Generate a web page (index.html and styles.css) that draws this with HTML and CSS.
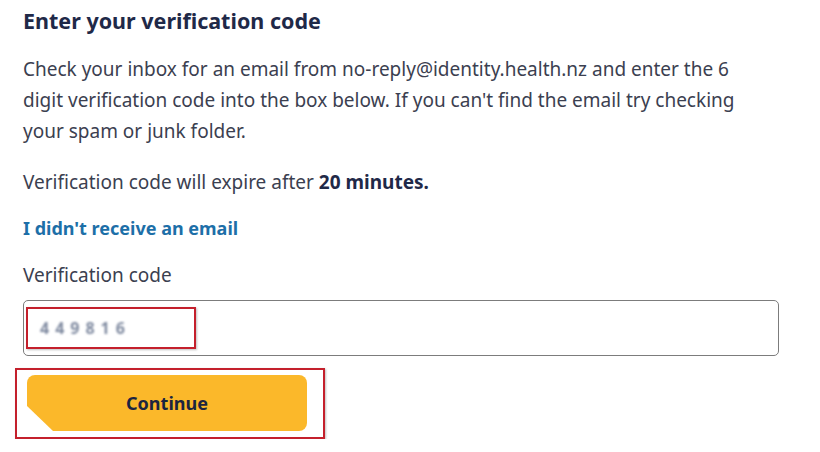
FILE: index.html
```html
<!DOCTYPE html>
<html lang="en">
<head>
<meta charset="utf-8">
<title>Enter your verification code</title>
<link rel="stylesheet" href="styles.css">
</head>
<body>
<main class="page">
  <h1 class="title">Enter your verification code</h1>
  <p class="intro">Check your inbox for an email from no-reply@identity.health.nz and enter the 6 digit verification code into the box below. If you can't find the email try checking your spam or junk folder.</p>
  <p class="expiry">Verification code will expire after <strong>20 minutes.</strong></p>
  <a class="resend" href="#">I didn't receive an email</a>
  <label class="field-label" for="code">Verification code</label>
  <div class="input-box">
    <span class="highlight"><span class="code" id="code">449816</span></span>
  </div>
  <div class="button-highlight">
    <button class="continue" type="button">Continue</button>
  </div>
</main>
</body>
</html>
```

FILE: styles.css
```css
* { box-sizing: border-box; }

html, body {
  margin: 0;
  background: #ffffff;
}

body {
  font-family: "Noto Sans", "Open Sans", "Liberation Sans", sans-serif;
  color: #3b4050;
}

.page {
  width: 780px;
  padding: 6px 0 0 23px;
  display: flex;
  flex-direction: column;
  align-items: flex-start;
}

.title {
  margin: 0;
  font-size: 21.5px;
  line-height: 30px;
  font-weight: 700;
  color: #1f2948;
}

.intro {
  margin: 18px 0 0;
  max-width: 745px;
  font-size: 19px;
  line-height: 31px;
}

.expiry {
  margin: 20px 0 0;
  font-size: 19px;
  line-height: 31px;
}

.expiry strong {
  color: #1f2948;
  font-weight: 700;
}

.resend {
  margin-top: 15px;
  font-size: 18px;
  line-height: 31px;
  font-weight: 700;
  color: #1d6fa8;
  text-decoration: none;
}

.field-label {
  margin-top: 16px;
  font-size: 19px;
  line-height: 31px;
}

.input-box {
  margin-top: 9px;
  width: 756px;
  height: 56px;
  border: 1px solid #7c7c7c;
  border-radius: 5px;
  padding: 6px 0 0 2px;
  display: flex;
  align-items: flex-start;
}

.highlight {
  width: 170px;
  height: 42px;
  border: 2px solid #c4202c;
  box-shadow: 1px 1px 2px rgba(0, 0, 0, 0.25);
  display: flex;
  align-items: center;
  padding-left: 12px;
}

.code {
  font-size: 16px;
  font-weight: 700;
  letter-spacing: 6px;
  color: #7f8aa0;
  filter: blur(1.2px);
}

.button-highlight {
  margin: 12px 0 0 -8px;
  border: 2px solid #c4202c;
  box-shadow: 1px 1px 2px rgba(0, 0, 0, 0.25);
  padding: 5px 16px 6px 10px;
  display: flex;
}

.continue {
  width: 280px;
  height: 56px;
  border: none;
  border-radius: 8px;
  background: #fbb82a;
  clip-path: polygon(0 0, 100% 0, 100% 100%, 26px 100%, 0 calc(100% - 25px));
  font-family: "Noto Sans", "Open Sans", "Liberation Sans", sans-serif;
  font-size: 18px;
  font-weight: 700;
  color: #1c2440;
  cursor: pointer;
}
```
